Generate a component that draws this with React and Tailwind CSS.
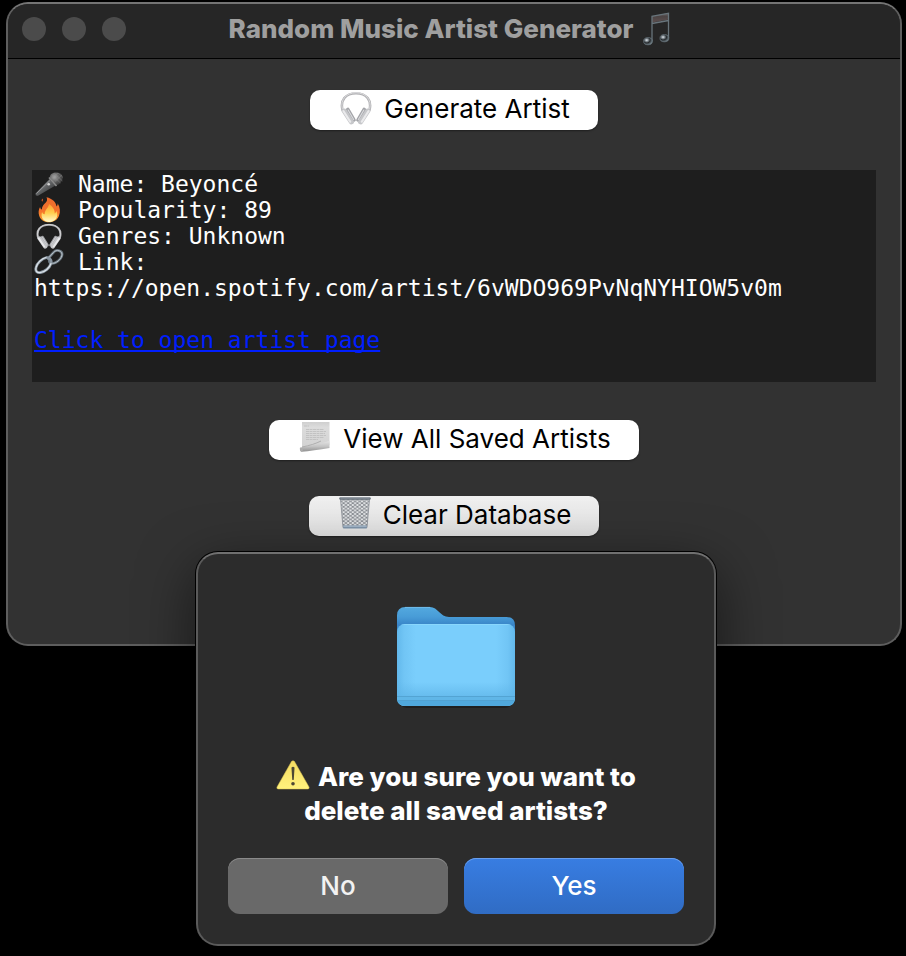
function MusicNotes() {
  return (
    <svg viewBox="0 0 28 34" className="h-[34px] w-7" aria-hidden="true">
      <defs>
        <linearGradient id="noteBeam" x1="0" y1="0" x2="0" y2="1">
          <stop offset="0" stopColor="#6d6d70" />
          <stop offset="0.35" stopColor="#4c4444" />
          <stop offset="1" stopColor="#5d4f4f" />
        </linearGradient>
        <radialGradient id="noteHead" cx="0.35" cy="0.35" r="0.7">
          <stop offset="0" stopColor="#e4ebef" />
          <stop offset="0.3" stopColor="#7a8288" />
          <stop offset="0.55" stopColor="#25292c" />
          <stop offset="1" stopColor="#7a8991" />
        </radialGradient>
      </defs>
      <path d="M9 4.300 26 1V7.500L9 10.500Z" fill="url(#noteBeam)" />
      <path d="M9 29V4.300L25.500 1.200V26M9 11.500 25.500 8.500" fill="none" stroke="#68747b" strokeWidth="1.300" />
      <ellipse cx="5" cy="29.200" rx="4.400" ry="3.600" fill="url(#noteHead)" stroke="#66727a" strokeWidth=".8" />
      <ellipse cx="21.400" cy="26.200" rx="4.400" ry="3.600" fill="url(#noteHead)" stroke="#66727a" strokeWidth=".8" />
    </svg>
  );
}

function Headphones({ className }) {
  return (
    <svg viewBox="0 0 30 34" preserveAspectRatio="none" className={className} aria-hidden="true">
      <path d="M2.600 20C-.5 9 5.500 2.400 15 2.400S30.500 9 27.400 20" fill="none" stroke="#b0b0b3" strokeWidth="2.400" />
      <path d="M2.200 18C0 8.500 6 1.800 15 1.800S30 8.500 27.800 18" fill="none" stroke="#dedee0" strokeWidth=".9" />
      <g strokeLinecap="round">
        <path d="M7.300 18.500 13 29" stroke="#a3a4a8" strokeWidth="3.600" />
        <path d="M4 20 10.700 31" stroke="#c6c7ca" strokeWidth="4.800" />
        <path d="M3.200 20 9.600 30.800" stroke="#eaeaec" strokeWidth="2" />
        <path d="M7.600 19 12.800 28.600" stroke="#dcdde0" strokeWidth="1" />
        <path d="M22.700 18.500 17 29" stroke="#a3a4a8" strokeWidth="3.600" />
        <path d="M26 20 19.300 31" stroke="#c6c7ca" strokeWidth="4.800" />
        <path d="M26.800 20 20.400 30.800" stroke="#eaeaec" strokeWidth="2" />
        <path d="M22.400 19 17.200 28.600" stroke="#dcdde0" strokeWidth="1" />
      </g>
    </svg>
  );
}

function Microphone() {
  return (
    <svg viewBox="0 0 30 26" className="h-[26px] w-[30px]" aria-hidden="true">
      <defs>
        <linearGradient id="micBody" x1="0" y1="0" x2="1" y2="1">
          <stop offset="0" stopColor="#77797a" />
          <stop offset="0.45" stopColor="#66686a" />
          <stop offset="1" stopColor="#222" />
        </linearGradient>
        <radialGradient id="micHead" cx="0.35" cy="0.35" r="0.8">
          <stop offset="0" stopColor="#aaa" />
          <stop offset="0.55" stopColor="#555" />
          <stop offset="1" stopColor="#292929" />
        </radialGradient>
      </defs>
      <path d="M15.500 8 21.500 14.500 4 24.700Q1.200 25.300 1.500 22.500Z" fill="url(#micBody)" />
      <path d="M2.500 22.500 16 9.500" stroke="#9a9b9c" strokeWidth="1" />
      <path d="M15.800 6.500C16 2 21 .8 25 2c4 1.200 5 5 2.500 8.500-1.500 2.300-3.500 3.800-5.800 4Z" fill="url(#micHead)" />
      <path d="M15 6.500 22.500 15" stroke="#8a8a8a" strokeWidth="1.600" />
      <path d="m18 4 8.500 8M20.500 2.500l8 7.500M24 2l5 4.500M18 7.500l6-5.500M21 10.500l7-6.500" stroke="#8f8f8f" strokeWidth=".4" />
      <circle cx="14.700" cy="13.300" r="1.300" fill="#d5d5d5" />
    </svg>
  );
}

function Flame() {
  return (
    <svg viewBox="0 0 30 26" className="h-[26px] w-[30px]" aria-hidden="true">
      <defs>
        <linearGradient id="flameOuter" x1="0" y1="0" x2="0" y2="1">
          <stop offset="0" stopColor="#ed6b2d" />
          <stop offset="0.55" stopColor="#f4732c" />
          <stop offset="1" stopColor="#ffa62c" />
        </linearGradient>
        <linearGradient id="flameInner" x1="0" y1="0" x2="0" y2="1">
          <stop offset="0" stopColor="#ff9c30" />
          <stop offset="0.5" stopColor="#ffd04f" />
          <stop offset="1" stopColor="#fffbd0" />
        </linearGradient>
      </defs>
      <path d="M12.500.3c6 1.200 9.600 5.200 10 9.200 1-.8 1.300-2 1.100-3.200 2.500 3.800 3 8.700 1.400 12.500-1.600 4.200-5.300 6.500-10 6.500-5.200 0-8.500-2.600-9.800-6.500-1-3-.7-6.300.9-8.800.2 1.400.9 2.200 1.700 2.600.2-3.500 2-5.200 3.800-6.800 1.600-1.500 1.900-3.500.9-5.500Z" fill="url(#flameOuter)" />
      <path d="M15 7c3.800 2.500 6 6 5.700 9.500 1-.5 1.500-1.500 1.500-2.700 3 5.500-.5 11.200-7 11.200-5.600 0-9-4.700-7.100-10 .5 1.500 1.400 2.200 2.600 2.200C10.600 12.700 14.700 10.900 15 7Z" fill="url(#flameInner)" />
      <path d="M8.300 1.500q1.200 1 .2 3-1.600-.3-.2-3Z" fill="#df5b28" />
    </svg>
  );
}

function ChainLink() {
  return (
    <svg viewBox="0 0 30 26" className="h-[26px] w-[30px]" aria-hidden="true">
      <g fill="none" strokeLinecap="round">
        <path d="M14 9.500 19.500 3.500C22-.2 29.500 1.500 27.800 7c-1 3.500-5.800 7.500-9.200 7.500-2.800 0-4-2-3-4.500" stroke="#6b7780" strokeWidth="2.600" />
        <path d="M14 9.500 19.500 3.500C22-.2 29.500 1.500 27.800 7c-1 3.500-5.800 7.500-9.200 7.500" stroke="#b9c3ca" strokeWidth="1" />
        <path d="M12.500 8.500C8 9.500 3 14 2 18.500 1 22.500 3.500 24 6.500 23.500 11 22.800 15.500 19 17 14.500c.8-3-.8-5.800-4.500-6Z" stroke="#8995a0" strokeWidth="2.800" />
        <path d="M12 8.500C8 9.500 3 14 2 18.500 1 22.500 3.500 24 6.500 23.500 11 22.800 15.500 19 17 14.500" stroke="#dde4ea" strokeWidth="1.200" />
      </g>
    </svg>
  );
}

function Scroll() {
  return (
    <svg viewBox="0 0 32 32" className="mb-1 h-8 w-8" aria-hidden="true">
      <defs>
        <linearGradient id="scrollPage" x1="0" y1="0" x2="0" y2="1">
          <stop offset="0" stopColor="#cfcfcf" />
          <stop offset="0.2" stopColor="#dcdcdc" />
          <stop offset="1" stopColor="#d2d2d2" />
        </linearGradient>
        <linearGradient id="scrollRoll" x1="0" y1="0" x2="0" y2="1">
          <stop offset="0" stopColor="#e4e4e4" />
          <stop offset="0.5" stopColor="#c4c4c4" />
          <stop offset="1" stopColor="#8f8f8f" />
        </linearGradient>
      </defs>
      <path d="M3 1h27.500v23L3 27.500Z" fill="url(#scrollPage)" />
      <path d="M5 5h5M7 8.500h18M7 10.500h20M7 12.500h19M7 14.500h20M7 16.500h18M7 18.500h12" stroke="#bdbdbd" strokeWidth=".8" strokeDasharray="3 .5" />
      <path d="M1 26.500C9 25.500 19 23 30.500 20v7C20 29 10 30 2.500 30.800 1 30.500.5 28 1 26.500Z" fill="url(#scrollRoll)" />
      <path d="M3 26c8-1.500 14-3.500 19-6" fill="none" stroke="#a5a5a5" strokeWidth=".8" />
      <ellipse cx="2.600" cy="28.700" rx="1.300" ry="1.700" fill="#adadad" />
    </svg>
  );
}

function Wastebasket() {
  return (
    <svg viewBox="0 0 32 34" className="mb-1 h-[34px] w-8" aria-hidden="true">
      <defs>
        <pattern id="basketMesh" width="4.600" height="3.600" patternUnits="userSpaceOnUse">
          <path d="M0 0 4.600 3.600M4.600 0 0 3.600" stroke="#7c8288" strokeWidth=".9" />
        </pattern>
      </defs>
      <path d="M1.500 3h29L28 31.500H4Z" fill="#e4e6e8" />
      <path d="M1.500 3h29L28 31.500H4Z" fill="url(#basketMesh)" stroke="#868c93" strokeWidth=".8" />
      <path d="M4 29.500h24l-.3 3H4.300Z" fill="#7f95ab" />
      <path d="M4.500 30.200h23" stroke="#bfd0df" strokeWidth=".8" />
      <rect x=".2" y="1.200" width="31.600" height="2.600" rx="1.300" fill="#6a747e" />
      <path d="M1.500 2h29" stroke="#a7afb8" strokeWidth=".6" />
    </svg>
  );
}

function Folder() {
  return (
    <svg viewBox="0 0 120 104" className="h-[104px] w-[120px]" aria-hidden="true">
      <defs>
        <linearGradient id="folderBack" x1="0" y1="0" x2="0" y2="1">
          <stop offset="0" stopColor="#53a9df" />
          <stop offset="0.1" stopColor="#489cd7" />
          <stop offset="0.18" stopColor="#3985c8" />
          <stop offset="1" stopColor="#4ba3da" />
        </linearGradient>
        <linearGradient id="folderFront" x1="0" y1="0" x2="1" y2="0">
          <stop offset="0" stopColor="#62b8eb" />
          <stop offset="0.06" stopColor="#71c5f5" />
          <stop offset="0.16" stopColor="#7acefc" />
          <stop offset="0.84" stopColor="#7acefc" />
          <stop offset="0.94" stopColor="#71c5f5" />
          <stop offset="1" stopColor="#62b8eb" />
        </linearGradient>
        <linearGradient id="folderFoot" x1="0" y1="0" x2="0" y2="1">
          <stop offset="0" stopColor="#5fb5e8" stopOpacity="0" />
          <stop offset="1" stopColor="#5fb5e8" stopOpacity=".7" />
        </linearGradient>
        <clipPath id="folderClip">
          <rect x="1" y="18" width="118" height="82" rx="8" />
        </clipPath>
      </defs>
      <rect x="2" y="60" width="116" height="42" rx="9" fill="#1e1e1e" />
      <path d="M1 9.500Q1 1 9.500 1H34C42 1 44 11 53 11h57.500Q119 11 119 19.500V92q0 8-8 8H9q-8 0-8-8Z" fill="url(#folderBack)" />
      <path d="M9 1.400H34" stroke="#78c0ea" strokeWidth=".8" />
      <g clipPath="url(#folderClip)">
        <rect x="1" y="18" width="118" height="82" fill="url(#folderFront)" />
        <rect x="1" y="76" width="118" height="14" fill="url(#folderFoot)" />
        <rect x="1" y="90" width="118" height="4" fill="#60b6e7" />
        <rect x="1" y="94" width="118" height="6" fill="#50a8dc" />
        <path d="M1 90.500h118M1 94.500h118" stroke="#519fce" strokeWidth=".8" />
        <path d="M1 18.400h118" stroke="#91dafe" strokeWidth=".8" />
      </g>
    </svg>
  );
}

function Warning() {
  return (
    <svg viewBox="0 0 34 32" className="mr-2 inline-block h-8 w-[34px] align-[-5px]" aria-hidden="true">
      <defs>
        <linearGradient id="warningFill" x1="0" y1="0" x2="0" y2="1">
          <stop offset="0" stopColor="#f5dc62" />
          <stop offset="1" stopColor="#fff27d" />
        </linearGradient>
      </defs>
      <path d="M15.500 2.500Q17 .8 18.500 2.500L33 28q.8 2-1.500 2h-29Q.2 30 1 28Z" fill="url(#warningFill)" stroke="#d9c150" strokeWidth=".5" />
      <path d="M15.500 8.500q1.500-1.400 3 0L17.800 20.500q-.8 1-1.600 0Z" fill="#4c4734" />
      <circle cx="17" cy="24.800" r="1.800" fill="#4c4734" />
    </svg>
  );
}

function DetailLine({ icon, children }) {
  return (
    <p className="flex h-[26px] items-center gap-[14px]">
      {icon}
      <span>{children}</span>
    </p>
  );
}

const actionButton =
  "flex h-10 items-center gap-3 rounded-[10px] pr-7 pb-0.5 pl-[30px] text-[26px] leading-8 text-black shadow-[0_1px_2px_rgba(0,0,0,0.4)]";

export default function App() {
  return (
    <div className="relative min-h-screen bg-black px-1.5 pt-0.5 pb-2 pr-1 font-['Inter',sans-serif]">
      <main className="flex min-h-[644px] flex-col overflow-hidden rounded-[22px] border-2 border-[#5e5e5e] border-t-[#747474] bg-[#323232]">
        <header className="relative flex h-[55px] shrink-0 items-center justify-center border-b border-black bg-[#262626] pr-2 pb-1">
          <div className="absolute left-3.5 flex gap-4">
            <span className="h-6 w-6 rounded-full bg-[#4b4b4b]" />
            <span className="h-6 w-6 rounded-full bg-[#4b4b4b]" />
            <span className="h-6 w-6 rounded-full bg-[#4b4b4b]" />
          </div>
          <h1 className="flex items-center gap-2.5 text-[26px] leading-8 font-extrabold text-[#9f9f9f]">
            Random Music Artist Generator
            <MusicNotes />
          </h1>
        </header>
        <div className="flex flex-col items-center px-6 pt-[31px]">
          <button type="button" className={`${actionButton} bg-white`}>
            <Headphones className="mb-0.5 h-[34px] w-8" />
            Generate Artist
          </button>
          <section className="mt-10 min-h-[212px] w-full bg-[#1e1e1e] px-0.5 py-px font-['DejaVu_Sans_Mono',monospace] text-[23px] leading-[26px] text-white">
            <DetailLine icon={<Microphone />}>Name: Beyoncé</DetailLine>
            <DetailLine icon={<Flame />}>Popularity: 89</DetailLine>
            <DetailLine icon={<Headphones className="h-[26px] w-[30px] px-0.5" />}>Genres: Unknown</DetailLine>
            <DetailLine icon={<ChainLink />}>Link:</DetailLine>
            <p className="mb-[26px] break-words">https://open.spotify.com/artist/6vWDO969PvNqNYHIOW5v0m</p>
            <a href="#artist" className="text-[#001eff] underline decoration-2 underline-offset-2 [text-decoration-skip-ink:none]">
              Click to open artist page
            </a>
          </section>
          <button type="button" className={`${actionButton} mt-[38px] bg-white`}>
            <Scroll />
            View All Saved Artists
          </button>
          <button type="button" className={`${actionButton} mt-9 bg-linear-to-b from-[#f0f0f0] to-[#e0e0e0]`}>
            <Wastebasket />
            Clear Database
          </button>
        </div>
      </main>

      <div
        role="alertdialog"
        aria-labelledby="confirm-message"
        className="absolute top-[552px] left-1/2 -ml-[257px] w-[520px] rounded-[22px] border-2 border-[#5a5a5a] border-t-[#707070] bg-[#2c2c2c] px-[30px] pt-[52px] pb-[30px] shadow-[0_0_0_1px_#000,0_16px_56px_rgba(0,0,0,0.55)]"
      >
        <div className="flex justify-center">
          <Folder />
        </div>
        <p id="confirm-message" className="mt-[49px] text-center text-[26px] leading-[34px] font-extrabold text-white">
          <Warning />
          Are you sure you want to
          <br />
          delete all saved artists?
        </p>
        <div className="mt-[30px] grid grid-cols-2 gap-4">
          <button type="button" className="h-14 rounded-xl bg-[#696969] pb-0.5 text-[26px] font-medium text-[#f2f2f2] shadow-[inset_0_1px_0_#8a8a8a]">
            No
          </button>
          <button type="button" className="h-14 rounded-xl bg-linear-to-b from-[#387de2] to-[#306cc4] pb-0.5 text-[26px] font-medium text-white shadow-[inset_0_1px_0_#6a9fee]">
            Yes
          </button>
        </div>
      </div>
    </div>
  );
}
